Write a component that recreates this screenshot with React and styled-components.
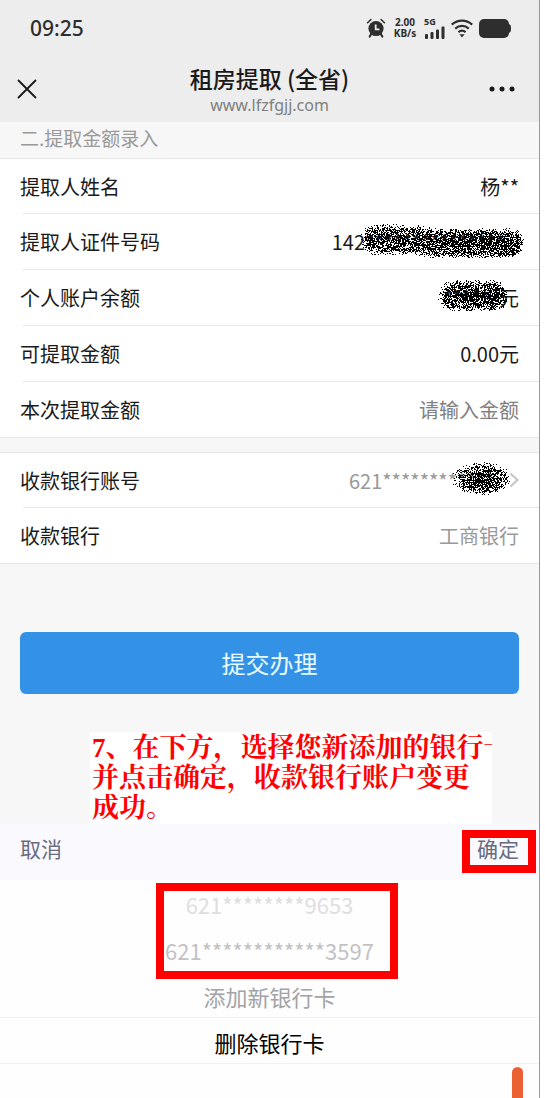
import styled, { createGlobalStyle } from "styled-components"

const GlobalStyle = createGlobalStyle`
  * {
    box-sizing: border-box;
  }

  body {
    margin: 0;
    background: #fff;
    color: #1a1a1a;
    font-family: "Noto Sans CJK SC", sans-serif;
  }

  button, input {
    margin: 0;
    padding: 0;
    border: 0;
    background: none;
    color: inherit;
    font: inherit;
  }
`

const Page = styled.div`
  position: relative;
  min-height: 100vh;
  margin-right: 5px;
  border-right: 1px solid #999;
  background: #f7f7f8;
  overflow: hidden;
`

// 状态栏
const StatusBar = styled.div`
  display: flex;
  align-items: center;
  justify-content: space-between;
  height: 56px;
  padding: 0 28px 0 30px;
  background: #ededed;
  color: #2e2e2e;
`

const Clock = styled.time`
  font-family: "Noto Sans", sans-serif;
  font-size: 21px;
  font-weight: 500;
`

const StatusIcons = styled.div`
  display: flex;
  align-items: center;
  gap: 6px;
`

const NetSpeed = styled.div`
  display: flex;
  flex-direction: column;
  align-items: center;
  width: 26px;
  font-family: "Noto Sans", sans-serif;
  font-size: 10px;
  font-weight: 700;
  line-height: 11px;
`

const Signal = styled.div`
  display: flex;
  flex-direction: column;
  font-family: "Noto Sans", sans-serif;
  font-size: 9px;
  font-weight: 700;
  line-height: 8px;
`

// 标题栏
const NavBar = styled.header`
  display: grid;
  grid-template-columns: 60px 1fr 60px;
  align-items: center;
  height: 66px;
  background: #ededed;
`

const NavButton = styled.button`
  display: flex;
  justify-content: ${({ $end }) => ($end ? "flex-end" : "flex-start")};
  padding: ${({ $end }) => ($end ? "0 24px 0 0" : "0 0 0 17px")};
`

const NavTitle = styled.div`
  display: flex;
  flex-direction: column;
  align-items: center;
  padding-top: 2px;
`

const Title = styled.h1`
  margin: 0;
  font-size: 23px;
  font-weight: 500;
  line-height: 30px;
`

const Host = styled.div`
  color: #808080;
  font-family: "Noto Sans", sans-serif;
  font-size: 16px;
  line-height: 24px;
`

// 表单
const SectionTitle = styled.h2`
  height: 36px;
  margin: 0;
  padding: 0 20px;
  color: #999;
  font-size: 19px;
  font-weight: 400;
  line-height: 32px;
`

const Group = styled.section`
  margin-bottom: ${({ $gap }) => $gap}px;
  border-top: 1px solid #e8e8e8;
  border-bottom: 1px solid #e8e8e8;
  background: #fff;
`

const Row = styled.div`
  display: flex;
  align-items: center;
  justify-content: space-between;
  height: 54px;
  padding: 0 20px;
  font-size: 20px;

  & + & {
    height: 56px;
    border-top: 1px solid #e8e8e8;
    border-image: linear-gradient(to right, transparent 24px, #e8e8e8 24px) 1;
  }
`

const Value = styled.span`
  display: flex;
  align-items: center;
  color: ${({ $muted }) => ($muted ? "#999" : "inherit")};
`

const AccountButton = styled.button`
  display: flex;
  align-items: center;
  color: #999;
`

const AmountInput = styled.input`
  width: 200px;
  text-align: right;

  &::placeholder {
    color: #808080;
    opacity: 1;
  }
`

const Hidden = styled.span`
  position: relative;
  width: ${({ $width }) => $width}px;
  height: 30px;
  line-height: 30px;
  white-space: nowrap;
  text-align: left;

  svg {
    position: absolute;
    top: -3px;
    left: -5px;
  }
`

const SubmitButton = styled.button`
  display: block;
  width: calc(100% - 40px);
  height: 62px;
  margin: 0 20px 38px;
  padding-bottom: 2px;
  border-radius: 6px;
  background: #3492e6;
  color: #e8fbff;
  font-size: 24px;
`

const Note = styled.p`
  width: 402px;
  height: 92px;
  margin: 0 0 0 90px;
  padding: 1px 2px;
  background: #fff;
  color: #f00;
  font-family: "Liberation Serif", "Noto Serif CJK SC", "Noto Sans CJK SC", serif;
  font-size: 27px;
  font-weight: 700;
  line-height: 30px;
  white-space: nowrap;
  overflow: hidden;
`

// 底部选择器
const PickerBar = styled.div`
  display: flex;
  align-items: center;
  justify-content: space-between;
  height: 56px;
  padding: 0 20px 8px;
  background: #faf9fe;
  color: #666b80;
  font-size: 21px;
`

const Marked = styled.div`
  position: relative;

  &::after {
    content: "";
    position: absolute;
    inset: -3px -17px -10px -15px;
    border: 8px solid #f00;
    pointer-events: none;
  }
`

const PickerList = styled.div`
  position: relative;
  height: 218px;
  background: #fefefe;
`

const PickerItem = styled.button`
  display: block;
  width: 100%;
  height: 46px;
  padding-top: 2px;
  border-bottom: ${({ $line }) => ($line ? "1px solid #f1f1f3" : "0")};
  color: ${({ $color }) => $color};
  font-size: 22px;
  line-height: 40px;
`

const CardFrame = styled.div`
  position: absolute;
  top: 3px;
  left: calc(50% - 114px);
  width: 242px;
  height: 96px;
  border: 8px solid #f00;
  pointer-events: none;
`

const OrangeMark = styled.div`
  position: absolute;
  right: 16px;
  bottom: 0;
  width: 11px;
  height: 31px;
  border-radius: 6px 6px 0 0;
  background: #eb6033;
`

// 喷点涂抹：沿带状区域随机撒黑点，中心更密
function sprayPath({ width, height, seed, density, slope = 0, oval = false }) {
  let state = seed
  const random = () => {
    state = (state * 1664525 + 1013904223) % 4294967296
    return state / 4294967296
  }
  const r = height / 2 - slope
  let d = ""
  for (let y = 0; y < height; y++) {
    for (let x = 0; x < width; x++) {
      const mid = height / 2 + slope * Math.tanh((x - width * 0.4) / 15)
      const cx = Math.min(Math.max(x, r), width - r)
      const dx = oval ? (x - width / 2) / (width / 2) : (x - cx) / r
      const dist = Math.hypot(dx, (y - mid) / r)
      const edge = Math.min(1, Math.max(0, (1.05 - dist) * 3))
      const p = edge * (density + (1 - dist) * 0.25) * (0.9 + 0.15 * (x / width))
      if (random() < p) d += `M${x} ${y}h1v1h-1z`
    }
  }
  return d
}

const sprays = {
  id: { width: 164, height: 34, seed: 11, density: 0.54, slope: 2 },
  balance: { width: 70, height: 31, seed: 23, density: 0.58 },
  account: { width: 58, height: 33, seed: 37, density: 0.56, oval: true },
}

function Covered({ name, width, children }) {
  const spray = sprays[name]
  return (
    <Hidden $width={width}>
      {children}
      <svg width={spray.width} height={spray.height} shapeRendering="crispEdges" aria-hidden="true">
        <path d={sprayPath(spray)} fill="#000" />
      </svg>
    </Hidden>
  )
}

function AlarmIcon() {
  return (
    <svg width="20" height="20" viewBox="0 0 18 19" fill="none" aria-hidden="true">
      <path d="M1 4.5 4.200 1.400M17 4.500l-3.200-3.100" stroke="#2e2e2e" strokeWidth="1.500" strokeLinecap="round" />
      <path d="M4.500 15 3 17.600M13.500 15l1.500 2.600" stroke="#2e2e2e" strokeWidth="2" strokeLinecap="round" />
      <circle cx="9" cy="10" r="7.200" fill="#2e2e2e" />
      <path d="M8.700 6.200v4.600h3.600" stroke="#ededed" strokeWidth="1.700" />
    </svg>
  )
}

function BarsIcon() {
  return (
    <svg width="21" height="13" viewBox="0 0 21 13" fill="#2e2e2e" aria-hidden="true">
      <rect x="1" y="8" width="3" height="5" rx="1" />
      <rect x="6.500" y="6" width="3" height="7" rx="1" />
      <rect x="12" y="3.500" width="3" height="9.500" rx="1" />
      <rect x="17.500" y="0.500" width="3" height="12.500" rx="1" />
    </svg>
  )
}

function WifiIcon() {
  return (
    <svg width="22" height="19" viewBox="0 0 22 19" fill="none" stroke="#2e2e2e" strokeWidth="2.200" aria-hidden="true">
      <path d="M.8 5.600C6.800.2 15.200.2 21.200 5.600M4.200 9.600c4-3.600 9.600-3.600 13.600 0M7.400 13.200c2.200-1.900 5-1.900 7.200 0" />
      <path d="M8.400 15.300h5.200L11 18.400z" fill="#2e2e2e" stroke="none" />
    </svg>
  )
}

function BatteryIcon() {
  return (
    <svg width="32" height="19" viewBox="0 0 32 19" fill="#2e2e2e" aria-hidden="true">
      <rect width="30" height="19" rx="5" />
      <path d="M29 5c2 0 3 1 3 4.500S31 14 29 14z" />
    </svg>
  )
}

export default function App() {
  return (
    <>
      <GlobalStyle />
      <Page>
        <StatusBar>
          <Clock>09:25</Clock>
          <StatusIcons>
            <AlarmIcon />
            <NetSpeed>
              <span>2.00</span>
              <span>KB/s</span>
            </NetSpeed>
            <Signal>
              5G
              <BarsIcon />
            </Signal>
            <WifiIcon />
            <BatteryIcon />
          </StatusIcons>
        </StatusBar>
        <NavBar>
          <NavButton type="button" aria-label="关闭">
            <svg width="20" height="20" viewBox="0 0 20 20" stroke="#1a1a1a" strokeWidth="1.800" strokeLinecap="round">
              <path d="M1.500 1.500l17 17M18.500 1.500l-17 17" />
            </svg>
          </NavButton>
          <NavTitle>
            <Title>租房提取 (全省)</Title>
            <Host>www.lfzfgjj.com</Host>
          </NavTitle>
          <NavButton type="button" aria-label="更多" $end>
            <svg width="26" height="6" viewBox="0 0 26 6" fill="#1a1a1a">
              <circle cx="3" cy="3" r="2.500" />
              <circle cx="13" cy="3" r="2.500" />
              <circle cx="23" cy="3" r="2.500" />
            </svg>
          </NavButton>
        </NavBar>

        <SectionTitle>二.提取金额录入</SectionTitle>
        <Group $gap={14}>
          <Row>
            <span>提取人姓名</span>
            <Value>杨**</Value>
          </Row>
          <Row>
            <span>提取人证件号码</span>
            <Value>
              142
              <Covered name="id" width={154}>***************</Covered>
            </Value>
          </Row>
          <Row>
            <span>个人账户余额</span>
            <Value>
              <Covered name="balance" width={56}>*****</Covered>
              元
            </Value>
          </Row>
          <Row>
            <span>可提取金额</span>
            <Value>0.00元</Value>
          </Row>
          <Row>
            <label htmlFor="amount">本次提取金额</label>
            <AmountInput id="amount" type="text" placeholder="请输入金额" />
          </Row>
        </Group>
        <Group $gap={68}>
          <Row>
            <span id="account">收款银行账号</span>
            <AccountButton type="button" aria-labelledby="account">
              621********
              <Covered name="account" width={52}>****</Covered>
              <svg width="10" height="16" viewBox="0 0 10 16" fill="none" stroke="#c4c4c4" strokeWidth="2">
                <path d="M1.500 1.500 8.500 8l-7 6.500" />
              </svg>
            </AccountButton>
          </Row>
          <Row>
            <span>收款银行</span>
            <Value $muted>工商银行</Value>
          </Row>
        </Group>
        <SubmitButton type="button">提交办理</SubmitButton>

        <Note>
          7、在下方，选择您新添加的银行卡
          <br />
          并点击确定，收款银行账户变更
          <br />
          成功。
        </Note>

        <PickerBar>
          <button type="button">取消</button>
          <Marked>
            <button type="button">确定</button>
          </Marked>
        </PickerBar>
        <PickerList>
          <PickerItem type="button" $color="#dededf">621********9653</PickerItem>
          <PickerItem type="button" $color="#c2c2c4">621************3597</PickerItem>
          <PickerItem type="button" $color="#a3a3a5" $line>添加新银行卡</PickerItem>
          <PickerItem type="button" $color="#000" $line>删除银行卡</PickerItem>
          <CardFrame />
        </PickerList>
        <OrangeMark />
      </Page>
    </>
  )
}
